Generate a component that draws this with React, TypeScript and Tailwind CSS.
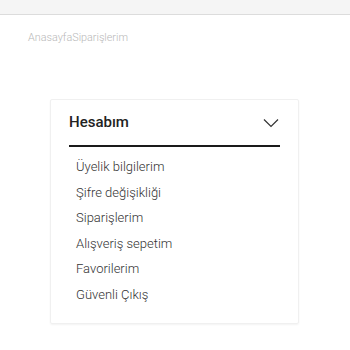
import React from "react";

const items = [
  "Üyelik bilgilerim",
  "Şifre değişikliği",
  "Siparişlerim",
  "Alışveriş sepetim",
  "Favorilerim",
  "Güvenli Çıkış",
];

export default function App() {
  return (
    <div className="w-[350px] h-[350px] bg-white overflow-hidden" style={{ fontFamily: "Roboto, 'Liberation Sans', sans-serif" }}>
      <div className="h-[15px] bg-[#f5f5f5] border-b border-[#dcdcdc]" />
      <div className="pl-[28px] pt-[16px] text-[10.8px] leading-[14px] font-light text-[#b8b8b8]">AnasayfaSiparişlerim</div>
      <div className="mt-[54px] ml-[50px] w-[249px] h-[225px] border border-[#f0f0f0] rounded-[2px] shadow-[0_1px_2px_rgba(0,0,0,0.05)] px-[18px]">
        <div className="flex items-center justify-between h-[47px] border-b-2 border-[#1a1a1a]">
          <span className="text-[15px] font-medium text-[#222]">Hesabım</span>
          <svg width="16" height="10" viewBox="0 0 16 10" className="mr-[1px]">
            <path d="M1 1.5 L8 8.5 L15 1.5" fill="none" stroke="#333" strokeWidth="1.2" />
          </svg>
        </div>
        <div className="pt-[7px] pl-[7px] flex flex-col">
          {items.map((t) => (
            <div key={t} className="h-[25.5px] leading-[25.5px] text-[13px] font-light text-[#333]">{t}</div>
          ))}
        </div>
      </div>
    </div>
  );
}
